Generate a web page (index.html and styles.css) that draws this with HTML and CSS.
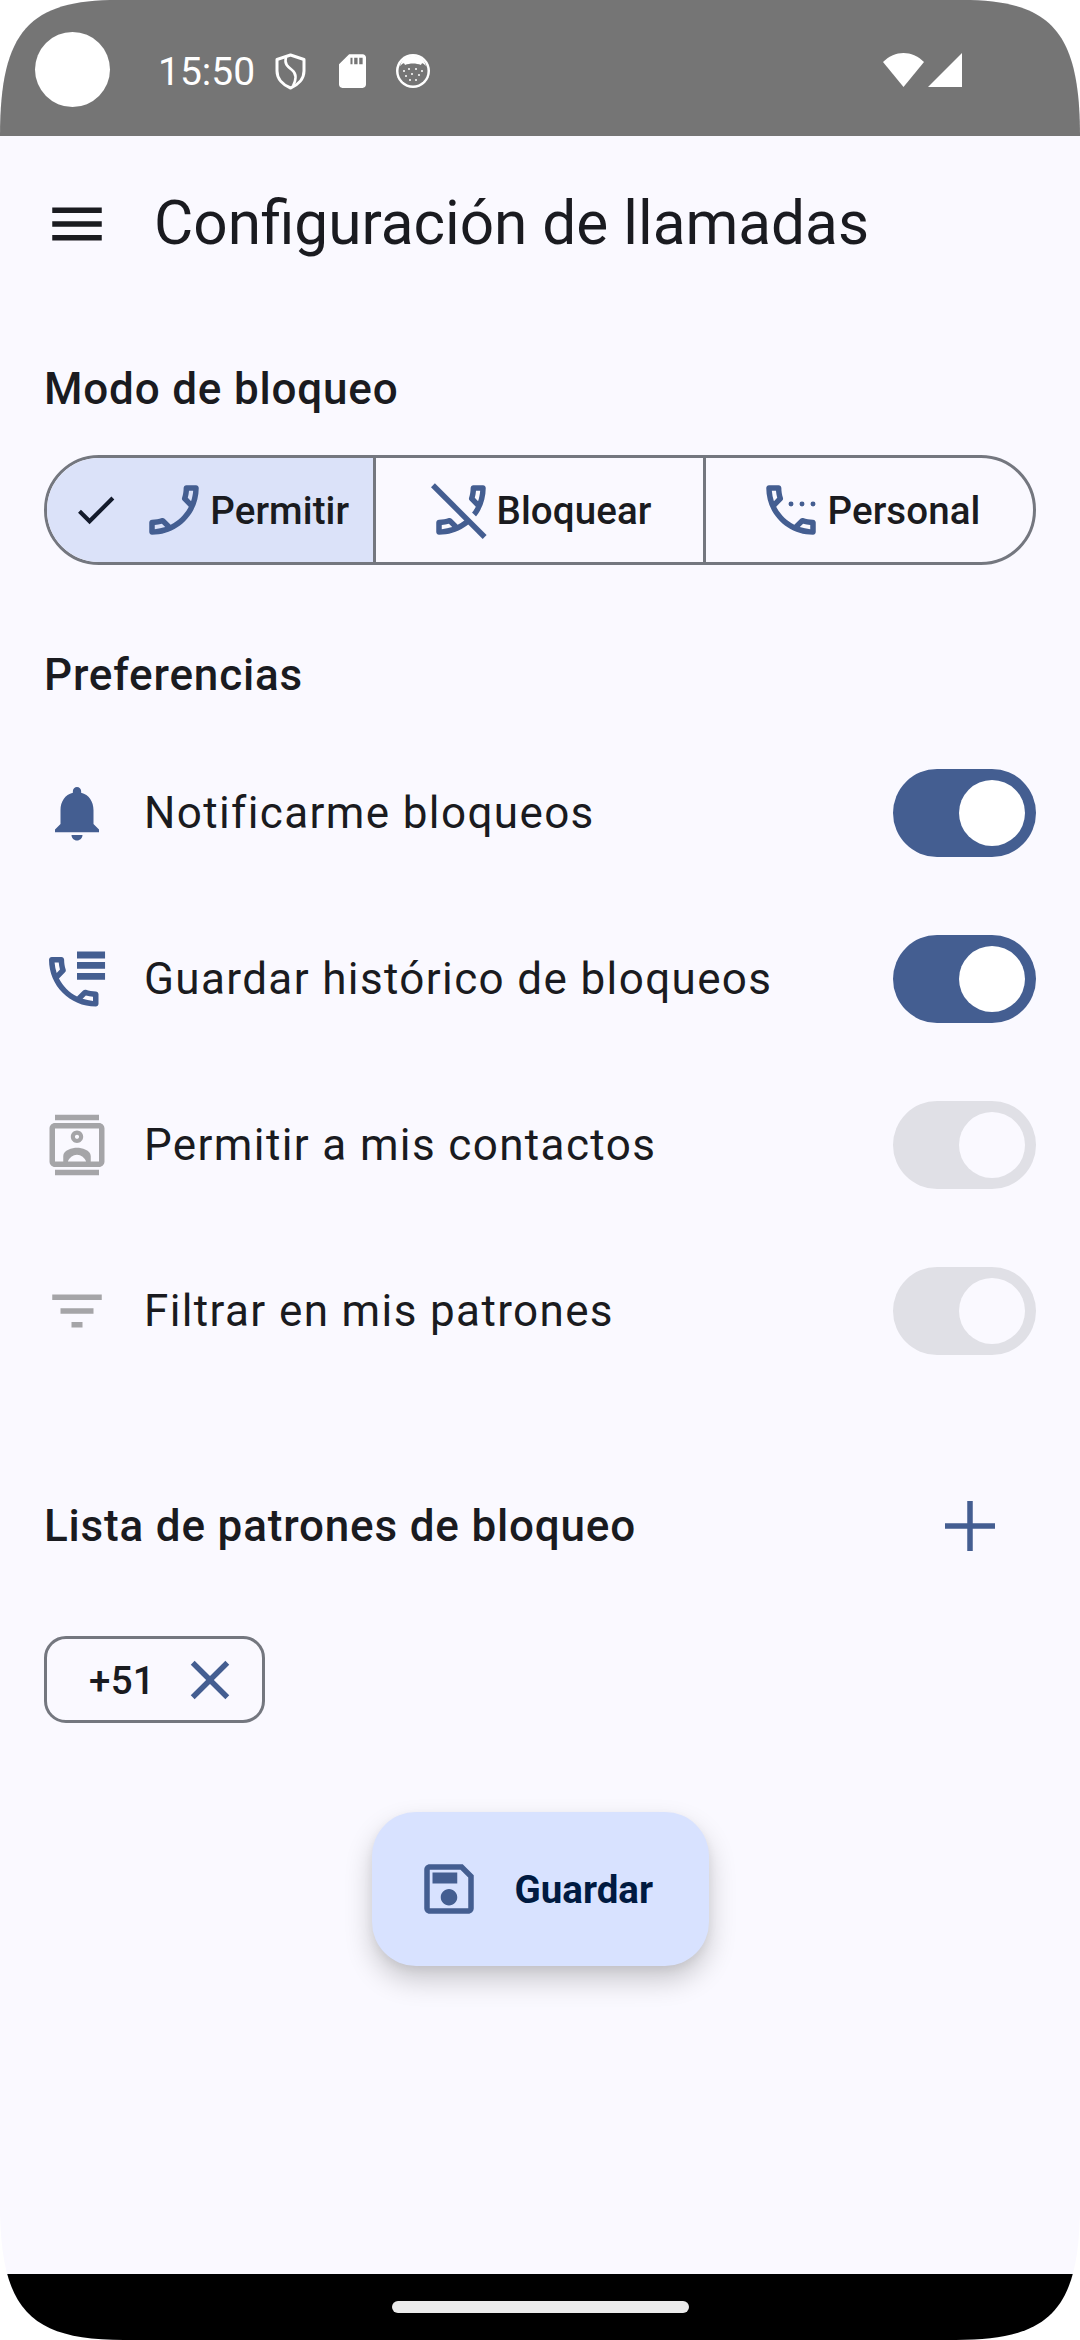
FILE: index.html
```html
<!DOCTYPE html>
<html lang="es">
<head>
<meta charset="utf-8">
<title>Configuración de llamadas</title>
<link rel="stylesheet" href="styles.css">
</head>
<body>
<svg class="defs" width="0" height="0" aria-hidden="true">
  <symbol id="call" viewBox="0 0 24 24"><path d="M6.54 5c.06.89.21 1.76.45 2.59l-1.2 1.2c-.41-1.2-.67-2.47-.76-3.79h1.51m9.86 12.02c.85.24 1.72.39 2.6.45v1.49c-1.32-.09-2.59-.35-3.8-.75l1.2-1.19M7.5 3H4c-.55 0-1 .45-1 1 0 9.39 7.61 17 17 17 .55 0 1-.45 1-1v-3.49c0-.55-.45-1-1-1-1.24 0-2.45-.2-3.57-.57-.1-.04-.21-.05-.31-.05-.26 0-.51.1-.71.29l-2.2 2.2c-2.83-1.45-5.15-3.76-6.59-6.59l2.2-2.2c.28-.28.36-.67.25-1.02C8.7 6.45 8.5 5.25 8.5 4c0-.55-.45-1-1-1z"/></symbol>
</svg>
<div class="screen">
  <header class="status">
    <span class="camera"></span>
    <span class="clock">15:50</span>
    <svg class="st-shield" viewBox="0 0 31 37"><path d="M15.5 2 L29 6.5 V18 C29 26 23 32 15.5 35 C8 32 2 26 2 18 V6.5 Z" fill="none" stroke="#fff" stroke-width="3" stroke-linejoin="round"/><path d="M11 4 C9 11 13 14 17 17 C21 20 22 25 18 33" fill="none" stroke="#fff" stroke-width="2.6"/></svg>
    <svg class="st-sd" viewBox="4 2 16 20"><path fill="#fff" d="M18 2h-8L4 8v12c0 1.1.9 2 2 2h12c1.1 0 2-.9 2-2V4c0-1.1-.9-2-2-2zm-6 6h-1.200V4.200H12V8zm3 0h-2V4.200h2V8zm3 0h-2V4.200h2V8z"/></svg>
    <svg class="st-face" viewBox="0 0 34 34"><circle cx="17" cy="17" r="17" fill="#fff"/><circle cx="17" cy="17" r="14.500" fill="#757575"/><path fill="#fff" d="M4 12 C6 4 12 2 17 2 C22 2 28 4 30 12 C27 9 26 8 25 11 C20 9 14 9 9 11 C8 8 7 9 4 12Z"/><g fill="#fff"><circle cx="8" cy="17" r="1"/><circle cx="13" cy="15" r="1"/><circle cx="20" cy="15" r="1"/><circle cx="26" cy="17" r="1"/><circle cx="10" cy="22" r="1"/><circle cx="16" cy="20" r="1"/><circle cx="23" cy="21" r="1"/><circle cx="14" cy="26" r="1"/><circle cx="20" cy="26" r="1"/></g></svg>
    <span class="status-gap"></span>
    <svg class="st-wifi" viewBox="0 0 41 34"><path fill="#fff" d="M0 9 C12 -3 29 -3 41 9 L20.500 34Z"/></svg>
    <svg class="st-signal" viewBox="0 0 34 34"><path fill="#fff" d="M0 34 L34 0 V34Z"/></svg>
  </header>

  <div class="appbar">
    <svg class="icon menu-icon" viewBox="0 0 24 24"><path d="M3 18h18v-2H3v2zm0-5h18v-2H3v2zm0-7v2h18V6H3z"/></svg>
    <h1 class="title">Configuración de llamadas</h1>
  </div>

  <main class="content">
    <h2 class="section-title first">Modo de bloqueo</h2>
    <div class="segmented">
      <div class="segment selected">
        <svg class="check" viewBox="0 0 24 24"><path d="M9 16.170L4.830 12l-1.410 1.410L9 19 21 7l-1.410-1.410z"/></svg>
        <svg class="icon primary flip check-next"><use href="#call"/></svg>
        <span class="seg-label">Permitir</span>
      </div>
      <div class="segment">
        <svg class="icon primary" viewBox="0 0 24 24"><g transform="translate(24 0) scale(-1 1)"><use href="#call" width="24" height="24"/></g><path d="M3.200 1.800 L22 20.600" stroke="#faf9ff" stroke-width="2.400" fill="none"/><path d="M1.800 3 L20.600 21.800" stroke="#445e91" stroke-width="2" fill="none"/></svg>
        <span class="seg-label">Bloquear</span>
      </div>
      <div class="segment">
        <svg class="icon primary" viewBox="0 0 24 24"><use href="#call" width="24" height="24"/><circle cx="12" cy="9.800" r=".9"/><circle cx="16" cy="9.800" r=".9"/><circle cx="20" cy="9.800" r=".9"/></svg>
        <span class="seg-label">Personal</span>
      </div>
    </div>

    <h2 class="section-title pref">Preferencias</h2>
    <ul class="prefs">
      <li class="pref-row">
        <svg class="icon primary" viewBox="0 0 24 24"><path d="M12 22c1.100 0 2-.9 2-2h-4c0 1.100.89 2 2 2zm6-6v-5c0-3.070-1.640-5.640-4.500-6.320V4c0-.83-.67-1.500-1.500-1.500s-1.500.67-1.500 1.500v.68C7.630 5.360 6 7.920 6 11v5l-2 2v1h16v-1l-2-2z"/></svg>
        <span class="pref-label">Notificarme bloqueos</span>
        <span class="switch on"><span class="thumb"></span></span>
      </li>
      <li class="pref-row">
        <svg class="icon primary" viewBox="0 0 24 24"><use href="#call" x="-1.180" y="1" width="24" height="24"/><path d="M12 2h10.200v2.500H12zM12 5.800h10.200v2.500H12zM12 9.800h10.200v2.500H12z"/></svg>
        <span class="pref-label">Guardar histórico de bloqueos</span>
        <span class="switch on"><span class="thumb"></span></span>
      </li>
      <li class="pref-row">
        <svg class="icon muted" viewBox="0 0 24 24"><path d="M20 1H4v2h16V1zM4 23h16v-2H4v2zM20 4H4c-1.100 0-2 .9-2 2v12c0 1.100.9 2 2 2h16c1.100 0 2-.9 2-2V6c0-1.100-.9-2-2-2zm0 14H4V6h16v12zm-8-6.750c1.240 0 2.250-1.010 2.250-2.250S13.240 6.750 12 6.750 9.750 7.760 9.750 9s1.010 2.250 2.250 2.250zm0-3c.41 0 .75.34.75.75s-.34.75-.75.75-.75-.34-.75-.75.34-.75.75-.75zM17 15.990c0-2.090-3.310-2.990-5-2.990s-5 .9-5 2.990V18h1.700c.3-1.300 1.900-2.500 3.300-2.500s3 1.200 3.300 2.500H17z"/></svg>
        <span class="pref-label">Permitir a mis contactos</span>
        <span class="switch off"><span class="thumb"></span></span>
      </li>
      <li class="pref-row">
        <svg class="icon muted" viewBox="0 0 24 24"><path d="M10 18h4v-2h-4v2zM3 6v2h18V6H3zm3 7h12v-2H6v2z"/></svg>
        <span class="pref-label">Filtrar en mis patrones</span>
        <span class="switch off"><span class="thumb"></span></span>
      </li>
    </ul>

    <div class="list-head">
      <h2 class="section-title">Lista de patrones de bloqueo</h2>
      <span class="add-btn"><svg class="add-icon" viewBox="0 0 50 50"><path d="M22.250 0h5.500v22.250H50v5.500H27.750V50h-5.500V27.750H0v-5.500h22.250z"/></svg></span>
    </div>

    <div class="chip">
      <span class="chip-label">+51</span>
      <svg class="icon primary" viewBox="0 0 24 24"><path d="M19 6.410L17.590 5 12 10.590 6.410 5 5 6.410 10.590 12 5 17.590 6.410 19 12 13.410 17.590 19 19 17.590 13.410 12z"/></svg>
    </div>

    <button class="fab">
      <svg class="icon primary" viewBox="0 0 24 24"><path d="M17 3H5c-1.110 0-2 .9-2 2v14c0 1.100.89 2 2 2h14c1.100 0 2-.9 2-2V7l-4-4zm2 16H5V5h11.170L19 7.830V19zm-7-7c-1.660 0-3 1.340-3 3s1.340 3 3 3 3-1.340 3-3-1.340-3-3-3zM6 6h9v4H6z"/></svg>
      <span class="fab-label">Guardar</span>
    </button>
  </main>

  <footer class="navbar"><span class="handle"></span></footer>
</div>
</body>
</html>
```
FILE: styles.css
```css
* { box-sizing: border-box; }
html, body { margin: 0; padding: 0; background: #fff; }
body { width: 1080px; height: 2340px; overflow: hidden; font-family: Roboto, "Noto Sans", sans-serif; color: #1a1b20; }
.defs { position: absolute; }
.screen {
  width: 1080px; height: 2340px; display: flex; flex-direction: column; background: #faf9ff;
  clip-path: path("M0 136 C0 30 30 0 118 0 H962 C1050 0 1080 30 1080 136 V2204 C1080 2310 1050 2340 956 2340 H124 C30 2340 0 2310 0 2204 Z");
}

/* status bar */
.status { height: 136px; flex: none; background: #757575; display: flex; align-items: center; padding-left: 35px; padding-right: 118px; }
.camera { width: 75px; height: 75px; border-radius: 50%; background: #fff; flex: none; margin-top: 3px; }
.clock { margin-left: 48px; font-size: 39px; line-height: 46px; color: #fff; font-weight: 400; margin-top: 8px; width: 117px; flex: none; }
.st-shield { width: 31px; height: 37px; flex: none; margin-top: 7px; }
.st-sd { width: 27px; height: 34px; flex: none; margin-left: 33px; margin-top: 6px; }
.st-face { width: 34px; height: 34px; flex: none; margin-left: 30px; margin-top: 6px; }
.status-gap { flex: 1; }
.st-wifi { width: 41px; height: 34px; flex: none; margin-top: 4px; }
.st-signal { width: 34px; height: 34px; flex: none; margin-left: 4px; margin-top: 4px; }

/* app bar */
.appbar { height: 176px; flex: none; display: flex; align-items: center; padding-left: 44px; gap: 44px; }
.icon { width: 66px; height: 66px; flex: none; display: block; }
.menu-icon { fill: #1a1b20; }
.primary { fill: #445e91; }
.muted { fill: #a5a5a8; }
.flip { transform: scaleX(-1); }
.title { margin: 0; font-size: 60.3px; line-height: 80px; font-weight: 400; }

/* content */
.content { flex: 1; display: flex; flex-direction: column; padding: 47px 44px 0; }
.section-title { margin: 0; font-size: 44px; line-height: 60px; font-weight: 500; letter-spacing: .82px; }
.section-title.pref { margin-top: 80px; }
.list-head .section-title { padding-top: 2px; }

.segmented { margin-top: 36px; height: 110px; display: grid; grid-template-columns: 329px 330px 1fr; border: 3px solid #74777f; border-radius: 55px; overflow: hidden; }
.segment { display: flex; align-items: center; justify-content: center; gap: 3px; border-right: 3px solid #74777f; }
.segment:last-child { border-right: 0; }
.segment.selected { background: #dbe2f9; }
.check { width: 49.5px; height: 49.5px; fill: #141b2c; flex: none; }
.check-next { margin-left: 18px; }
.seg-label { font-size: 38.5px; line-height: 50px; padding-top: 2px; font-weight: 500; letter-spacing: .1px; white-space: nowrap; }

.prefs { list-style: none; margin: 64px 0 0; padding: 0; display: flex; flex-direction: column; gap: 78px; }
.pref-row { height: 88px; display: flex; align-items: center; gap: 34px; }
.pref-label { flex: 1; font-size: 44px; line-height: 60px; letter-spacing: 1.375px; }
.switch { width: 143px; height: 88px; border-radius: 44px; display: flex; align-items: center; justify-content: flex-end; padding-right: 11px; flex: none; }
.switch.on { background: #445e91; }
.switch.off { background: #e0e0e6; }
.thumb { width: 66px; height: 66px; border-radius: 50%; display: block; }
.on .thumb { background: #fff; }
.off .thumb { background: #faf9ff; }

.list-head { margin-top: 140px; height: 60px; display: flex; align-items: center; justify-content: space-between; }
.add-btn { width: 132px; height: 60px; padding-top: 2px; display: flex; align-items: center; justify-content: center; }
.add-icon { width: 50px; height: 50px; fill: #445e91; }

.chip { margin-top: 81px; width: 221px; height: 87px; border: 3px solid #74777f; border-radius: 22px; display: flex; align-items: center; padding-left: 42px; }
.chip-label { font-size: 38.5px; line-height: 50px; padding-top: 2px; font-weight: 500; width: 88px; letter-spacing: .275px; }

.fab { align-self: center; margin-top: 89px; width: 337px; height: 154px; border: 0; border-radius: 44px; background: #d8e2ff; display: flex; align-items: center; padding: 0 0 0 44px; gap: 33px; font-family: inherit; box-shadow: 0 14px 28px rgba(0,0,0,.2), 0 4px 10px rgba(0,0,0,.06); }
.fab-label { font-size: 38.5px; line-height: 50px; padding-top: 2px; font-weight: 700; color: #001a41; }

/* navigation bar */
.navbar { height: 66px; flex: none; background: #000; display: flex; align-items: center; justify-content: center; }
.handle { width: 297px; height: 12px; border-radius: 6px; background: #ebebeb; }
```
